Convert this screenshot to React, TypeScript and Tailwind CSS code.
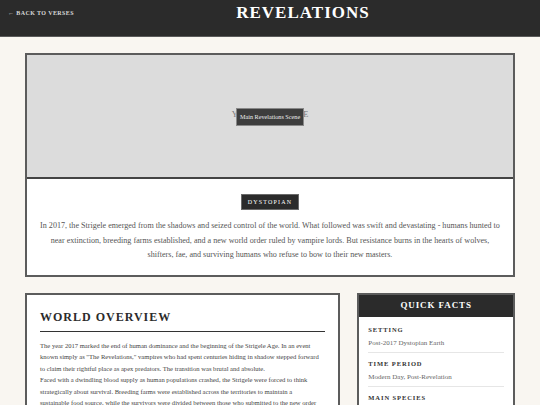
import React from "react";

const serif = { fontFamily: '"Liberation Serif", "Times New Roman", serif' };

function Fact({ label, value, first }: { label: string; value: string; first?: boolean }) {
  return (
    <div className={`${first ? "pt-[9px]" : "pt-[7px]"} pb-[4px] border-b border-[#e6e6e6]`}>
      <div className="text-[6.5px] leading-[8px] font-bold tracking-[0.9px] text-[#333]">{label}</div>
      <div className="mt-[4px] text-[7px] leading-[10px] text-[#666]">{value}</div>
    </div>
  );
}

const introLines = [
  "In 2017, the Strigele emerged from the shadows and seized control of the world. What followed was swift and devastating - humans hunted to",
  "near extinction, breeding farms established, and a new world order ruled by vampire lords. But resistance burns in the hearts of wolves,",
  "shifters, fae, and surviving humans who refuse to bow to their new masters.",
];

const overviewLines = [
  "The year 2017 marked the end of human dominance and the beginning of the Strigele Age. In an event",
  "known simply as \"The Revelations,\" vampires who had spent centuries hiding in shadow stepped forward",
  "to claim their rightful place as apex predators. The transition was brutal and absolute.",
  "Faced with a dwindling blood supply as human populations crashed, the Strigele were forced to think",
  "strategically about survival. Breeding farms were established across the territories to maintain a",
  "sustainable food source, while the survivors were divided between those who submitted to the new order",
  "and those who fled into the wilds to fight back against their vampire overlords.",
];

export default function App() {
  return (
    <div className="min-h-[405px] bg-[#f9f6f1]" style={serif}>
      <header className="h-[37px] bg-[#2b2b2b] border-b border-[#5a5a5a] flex items-start px-[8px] pt-[3px]">
        <a className="mt-[7px] text-[6px] leading-[7px] tracking-[0.4px] font-bold text-[#d8d8d8] whitespace-nowrap">
          ← BACK TO VERSES
        </a>
        <h1 className="flex-1 text-center text-[17px] leading-[20px] font-bold tracking-[1px] text-white">
          REVELATIONS
        </h1>
      </header>

      <main className="mx-[25px] mt-[16px]">
        <section className="border-2 border-[#5c5c5c] bg-white">
          <div className="relative h-[124px] bg-[#dcdcdc] border-b-2 border-[#444] flex items-center justify-center">
            <span className="text-[8.3px] leading-[10px] text-[#777] mt-[-2px] whitespace-nowrap">YOUR IMAGE HERE</span>
            <div className="absolute left-[209px] top-[53px] h-[18px] flex items-center px-[3px] bg-[#3d3d3d] border border-[#888] text-[6.2px] text-[#eee] whitespace-nowrap">
              Main Revelations Scene
            </div>
          </div>
          <div className="px-[13px] pt-[15px] pb-[12px] flex flex-col items-center">
            <span className="h-[16px] px-[6px] flex items-center bg-[#2b2b2b] border border-[#6a6a6a] text-[6px] tracking-[1.2px] text-white">
              DYSTOPIAN
            </span>
            <p className="mt-[9px] text-center text-[8.1px] leading-[14.5px] text-[#555]">
              {introLines.map((l, i) => (
                <span key={i} className="block whitespace-nowrap">
                  {l}
                </span>
              ))}
            </p>
          </div>
        </section>

        <div className="mt-[16px] grid grid-cols-[2fr_1fr] gap-[17px] items-start">
          <section className="border-2 border-[#5c5c5c] bg-white px-[13px] pt-[15px] pb-[14px]">
            <h2 className="text-[12px] leading-[14px] font-bold tracking-[1px] text-[#2b2b2b] pb-[7px] border-b border-[#333]">
              WORLD OVERVIEW
            </h2>
            <div className="mt-[8px] text-[6.6px] leading-[11.5px] text-[#444]">
              {overviewLines.map((l, i) => (
                <span key={i} className="block whitespace-nowrap">
                  {l}
                </span>
              ))}
            </div>
          </section>

          <aside className="border-2 border-[#5c5c5c] bg-white">
            <div className="h-[22px] bg-[#2b2b2b] flex items-center justify-center text-[9px] font-bold tracking-[0.9px] text-white">
              QUICK FACTS
            </div>
            <div className="px-[9px] pb-[10px]">
              <Fact first label="SETTING" value="Post-2017 Dystopian Earth" />
              <Fact label="TIME PERIOD" value="Modern Day, Post-Revelation" />
              <Fact label="MAIN SPECIES" value="Strigele, Wolves, Shifters, Fae, Humans" />
            </div>
          </aside>
        </div>
      </main>
    </div>
  );
}
